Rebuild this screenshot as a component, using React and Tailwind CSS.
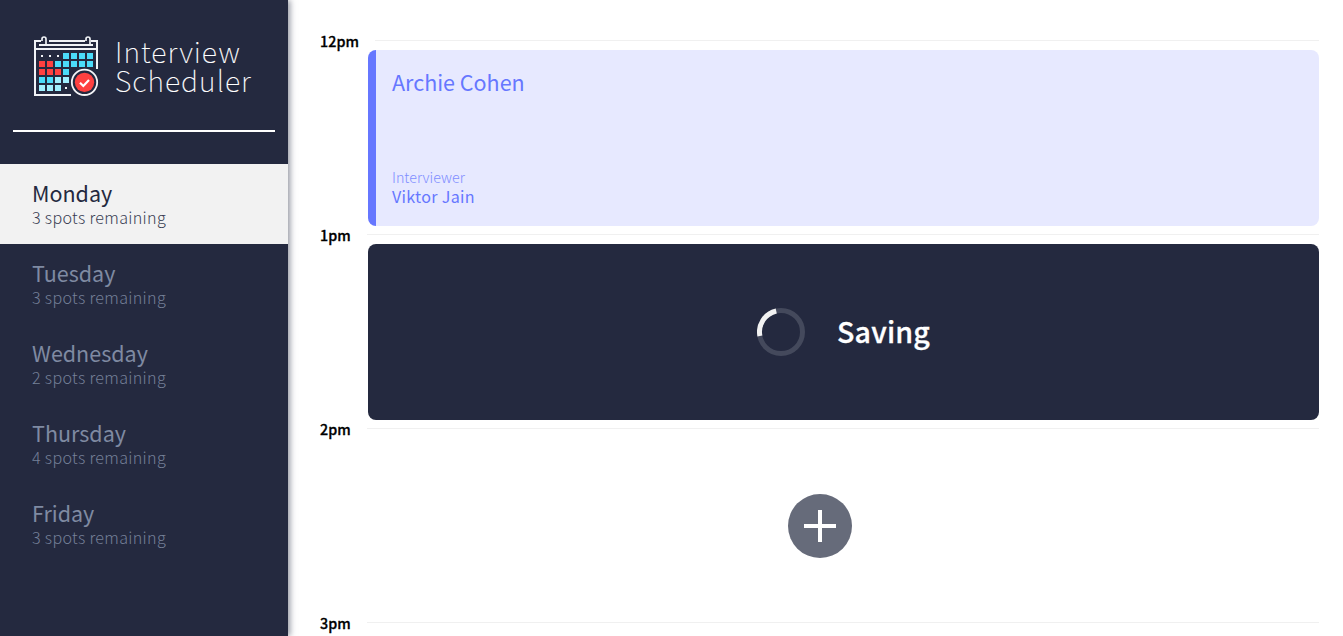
const days = [
  { name: "Monday", spots: 3 },
  { name: "Tuesday", spots: 3 },
  { name: "Wednesday", spots: 2 },
  { name: "Thursday", spots: 4 },
  { name: "Friday", spots: 3 },
];

const red = [[57, 108], [81, 108], [57, 132], [81, 132], [105, 132]];
const cyan = [
  [129, 84], [153, 84], [177, 84], [201, 84],
  [105, 108], [129, 108], [153, 108], [177, 108], [201, 108],
  [129, 132], [57, 156], [81, 156],
];
const pale = [[105, 156], [129, 156], [57, 180], [81, 180], [105, 180]];
const dots = [[63, 90], [87, 90], [111, 90], [135, 186]];

function Squares({ cells, size, fill }) {
  return cells.map(([x, y]) => (
    <rect key={`${x}-${y}`} x={x} y={y} width={size} height={size} fill={fill} />
  ));
}

function CalendarLogo() {
  return (
    <svg className="block h-[62px] w-[65px] shrink-0" viewBox="42 30 195 186" fill="none">
      <g stroke="#f1f3f7" strokeWidth="6">
        <path d="M153 210H45V48H63M87 48H195M213 48H231V132M45 72H231M57 60H219" />
        <path d="M78 60V42C78 34 66 34 66 42V48M210 60V42C210 34 198 34 198 42V48" strokeWidth="5" />
      </g>
      <Squares cells={red} size={18} fill="#ff4040" />
      <Squares cells={cyan} size={18} fill="#4bdcfa" />
      <Squares cells={pale} size={18} fill="#a1f0ff" />
      <Squares cells={dots} size={6} fill="#f1f3f7" />
      <circle cx="193.500" cy="172" r="42" fill="#24293f" />
      <circle cx="193.500" cy="172" r="38" stroke="#f4f4f7" strokeWidth="5.500" />
      <circle cx="193.500" cy="172" r="29" fill="#ff4040" />
      <path d="M180 173L190 183L207 165" stroke="#fff" strokeWidth="6.500" />
    </svg>
  );
}

function Day({ name, spots, selected }) {
  return (
    <li
      className={
        selected
          ? "h-20 bg-[#f2f2f2] pl-8 pt-[15px] text-[#24293f]"
          : "h-20 pl-8 pt-[15px] text-[#7f8aa2]"
      }
    >
      <h2 className="h-7 text-[21.5px] leading-[28px]">{name}</h2>
      <h3 className="text-[16.1px] font-light leading-[20px] tracking-[0.32px] opacity-90">
        {spots} spots remaining
      </h3>
    </li>
  );
}

function Slot({ time, wide, children }) {
  return (
    <section>
      <header className="flex h-[18px] items-center">
        <h4 className={wide ? "w-[55px] text-[14.3px] font-medium leading-[18px] tracking-[0.1px] [-webkit-text-stroke:0.3px_#000]" : "w-[47px] text-[14.3px] font-medium leading-[18px] tracking-[0.1px] [-webkit-text-stroke:0.3px_#000]"}>
          {time}
        </h4>
        <div className="mb-px h-px flex-1 bg-[#f0f0f0]" />
      </header>
      {children}
    </section>
  );
}

export default function App() {
  return (
    <main className="flex h-[636px] w-[1343px] overflow-hidden bg-white font-['Noto_Sans_CJK_SC',sans-serif] text-black">
      <aside className="z-10 w-72 shrink-0 bg-[#24293f] shadow-[2px_0_6px_rgba(36,41,63,0.5)]">
        <div className="flex h-[130px] pl-[34px] pt-[35px]">
          <CalendarLogo />
          <div className="ml-4 mt-px text-[28.6px] font-thin leading-[29px] tracking-[1.05px] text-white [-webkit-text-stroke:0.15px_#fff]">
            <div>Interview</div>
            <div>Scheduler</div>
          </div>
        </div>
        <div className="ml-[13px] h-0.5 w-[262px] bg-white" />
        <ul className="mt-8">
          {days.map((day) => (
            <Day key={day.name} {...day} selected={day.name === "Monday"} />
          ))}
        </ul>
      </aside>
      <div className="flex-1 pl-8 pr-6 pt-8">
        <Slot time="12pm" wide>
          <article className="ml-12 flex h-44 flex-col justify-between rounded-lg border-l-8 border-[#6677ff] bg-[#e7e9ff] px-4 pb-5 pt-[17px] text-[#6677ff]">
            <h2 className="text-[21.5px] leading-[30px]">Archie Cohen</h2>
            <div>
              <h4 className="text-[14.3px] font-light leading-[18px] opacity-80">Interviewer</h4>
              <h3 className="text-[16.1px] leading-[20px] tracking-[0.3px]">Viktor Jain</h3>
            </div>
          </article>
        </Slot>
        <Slot time="1pm">
          <article className="ml-12 flex h-44 items-center justify-center gap-8 rounded-lg bg-[#24293f] text-white">
            <svg className="block size-12" viewBox="0 0 48 48" fill="none" strokeWidth="5">
              <circle cx="24" cy="24" r="21.500" stroke="#44495c" />
              <path d="M2.890 28.080A21.500 21.500 0 0 1 19.240 3.030" stroke="#f2f2f2" />
            </svg>
            <h1 className="mb-[2px] text-[28.6px] font-medium leading-[36px] tracking-[0.15px] [-webkit-text-stroke:0.3px_#fff]">Saving</h1>
          </article>
        </Slot>
        <Slot time="2pm">
          <div className="flex h-44 items-center justify-center">
            <button className="block size-16 rounded-full bg-[#666b7a]" aria-label="Add">
              <svg className="block size-16" viewBox="0 0 64 64" stroke="#fff" strokeWidth="4">
                <path d="M16 32H48M32 16V48" />
              </svg>
            </button>
          </div>
        </Slot>
        <Slot time="3pm" />
      </div>
    </main>
  );
}
